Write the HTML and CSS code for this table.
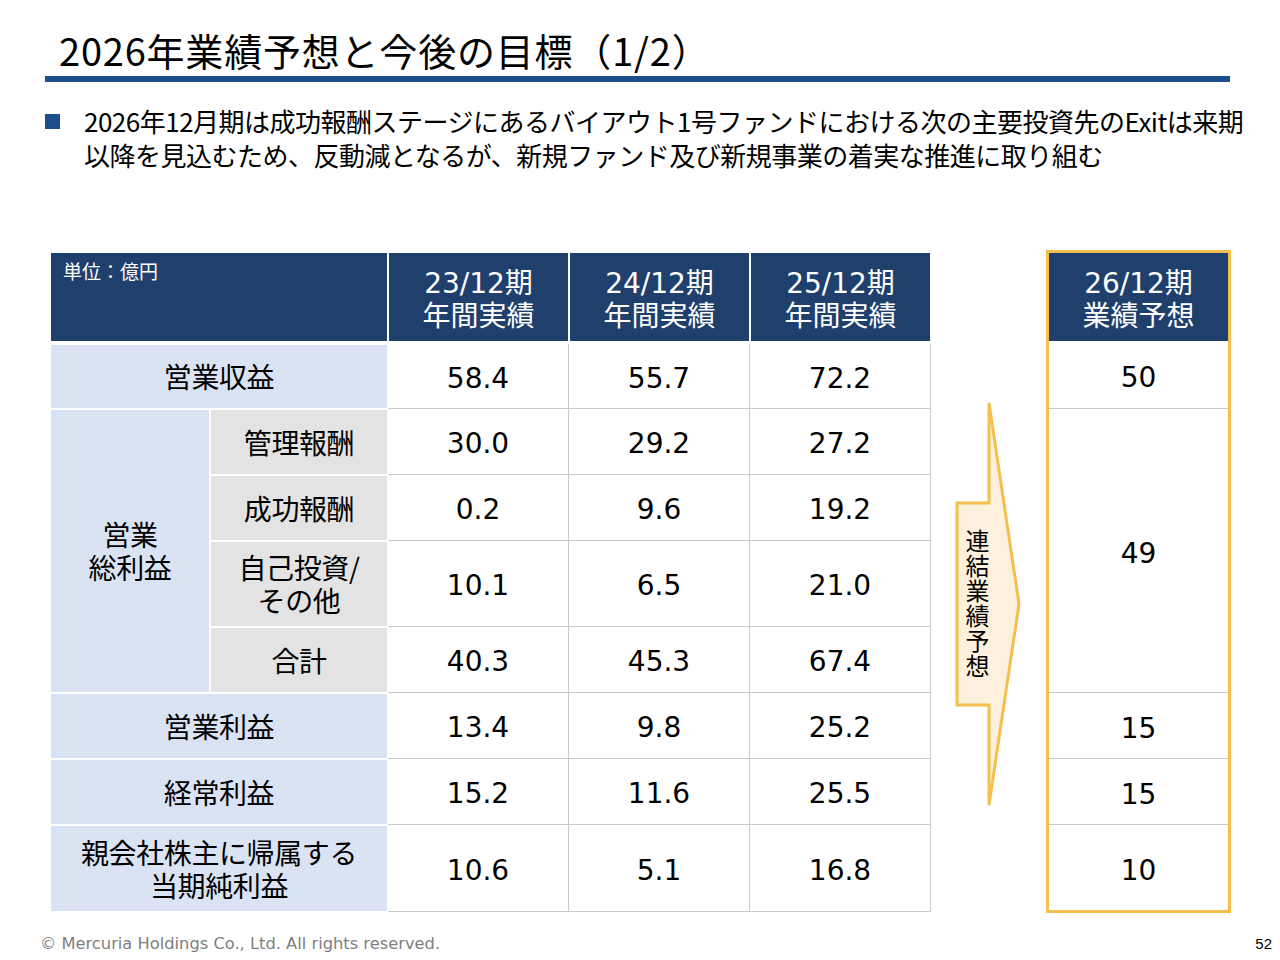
FILE: index.html
```html
<!DOCTYPE html>
<html lang="ja">
<head>
<meta charset="utf-8">
<title>2026年業績予想と今後の目標（1/2）</title>
<link rel="stylesheet" href="styles.css">
</head>
<body>
<div class="slide">
  <h1 class="title">2026年業績予想と今後の目標（1/2）</h1>
  <div class="rule"></div>

  <div class="lead">
    <span class="bullet"></span>
    <p class="lead-text">2026年12月期は成功報酬ステージにあるバイアウト1号ファンドにおける次の主要投資先のExitは来期<br>以降を見込むため、反動減となるが、新規ファンド及び新規事業の着実な推進に取り組む</p>
  </div>

  <div class="content">
    <div class="table">
      <div class="hd hd-unit span2">単位：億円</div>
      <div class="hd"><span>23/12期</span><span>年間実績</span></div>
      <div class="hd"><span>24/12期</span><span>年間実績</span></div>
      <div class="hd"><span>25/12期</span><span>年間実績</span></div>

      <div class="lbl span2">営業収益</div>
      <div class="num">58.4</div>
      <div class="num">55.7</div>
      <div class="num">72.2</div>

      <div class="lbl rowspan4"><span>営業</span><span>総利益</span></div>
      <div class="lbl sub">管理報酬</div>
      <div class="num">30.0</div>
      <div class="num">29.2</div>
      <div class="num">27.2</div>

      <div class="lbl sub">成功報酬</div>
      <div class="num">0.2</div>
      <div class="num">9.6</div>
      <div class="num">19.2</div>

      <div class="lbl sub"><span>自己投資/</span><span>その他</span></div>
      <div class="num">10.1</div>
      <div class="num">6.5</div>
      <div class="num">21.0</div>

      <div class="lbl sub">合計</div>
      <div class="num">40.3</div>
      <div class="num">45.3</div>
      <div class="num">67.4</div>

      <div class="lbl span2">営業利益</div>
      <div class="num">13.4</div>
      <div class="num">9.8</div>
      <div class="num">25.2</div>

      <div class="lbl span2">経常利益</div>
      <div class="num">15.2</div>
      <div class="num">11.6</div>
      <div class="num">25.5</div>

      <div class="lbl span2"><span>親会社株主に帰属する</span><span>当期純利益</span></div>
      <div class="num">10.6</div>
      <div class="num">5.1</div>
      <div class="num">16.8</div>
    </div>

    <div class="arrow-col">
      <svg class="arrow" width="70" height="406" viewBox="0 0 70 406" aria-hidden="true">
        <polygon points="36,2 66,203 36,404 36,304 4,304 4,102 36,102" fill="#fdf0dc" stroke="#f3c04f" stroke-width="3" stroke-linejoin="miter"/>
      </svg>
      <div class="arrow-text">連結業績予想</div>
    </div>

    <div class="forecast">
      <div class="f-hd"><span>26/12期</span><span>業績予想</span></div>
      <div class="f-cell">50</div>
      <div class="f-cell">49</div>
      <div class="f-cell">15</div>
      <div class="f-cell">15</div>
      <div class="f-cell f-last">10</div>
    </div>
  </div>

  <footer class="footer">
    <span class="copy">© Mercuria Holdings Co., Ltd. All rights reserved.</span>
    <span class="page">52</span>
  </footer>
</div>
</body>
</html>
```

FILE: styles.css
```css
body {
  margin: 0;
  background: #ffffff;
}

.slide {
  width: 1280px;
  height: 960px;
  box-sizing: border-box;
  padding-top: 31px;
  font-family: "Noto Sans CJK JP", "Noto Sans", sans-serif;
  color: #000000;
  overflow: hidden;
  background: #ffffff;
}

.title {
  margin: 0 0 0 59px;
  font-size: 38px;
  line-height: 38px;
  font-weight: 400;
  letter-spacing: 0.8px;
}

.rule {
  margin: 7px 0 0 45px;
  width: 1185px;
  height: 6px;
  background: #1f4e8d;
}

.lead {
  display: flex;
  align-items: flex-start;
  margin-top: 22px;
  padding-left: 45px;
}

.bullet {
  flex: none;
  width: 15px;
  height: 15px;
  margin-top: 10px;
  margin-right: 24px;
  background: #1f4e8d;
}

.lead-text {
  margin: 0;
  font-size: 26px;
  line-height: 34px;
  letter-spacing: -0.5px;
  white-space: nowrap;
}

.content {
  display: flex;
  align-items: flex-start;
  margin-top: 78px;
  padding-left: 50px;
}

.table {
  display: grid;
  grid-template-columns: 160px 178px repeat(3, 181px);
  grid-template-rows: 92px 65px 66px 66px 86px 66px 66px 66px 87px;
  margin-top: 2px;
}

.span2 {
  grid-column: span 2;
}

.rowspan4 {
  grid-row: span 4;
}

.hd {
  display: flex;
  flex-direction: column;
  align-items: center;
  justify-content: center;
  text-align: center;
  padding-top: 6px;
  background: #1f3f6d;
  color: #ffffff;
  border: 1px solid #ffffff;
  border-bottom-width: 3px;
  font-family: "DejaVu Sans", "Noto Sans CJK JP", sans-serif;
  font-size: 28px;
}

.hd span,
.f-hd span,
.lbl span {
  display: block;
  height: 33px;
  line-height: 33px;
}

.hd-unit {
  align-items: flex-start;
  justify-content: flex-start;
  text-align: left;
  padding: 7px 12px;
  font-family: "Noto Sans CJK JP", sans-serif;
  font-size: 19px;
  line-height: 22px;
}

.lbl {
  display: flex;
  flex-direction: column;
  align-items: center;
  justify-content: center;
  text-align: center;
  background: #dae3f3;
  border: 1px solid #ffffff;
  font-size: 28px;
  line-height: 33px;
  letter-spacing: -0.4px;
}

.sub {
  background: #e3e3e3;
}

.num {
  display: flex;
  align-items: center;
  justify-content: center;
  padding-top: 4px;
  border-right: 1px solid #c9c9c9;
  border-bottom: 1px solid #c9c9c9;
  font-family: "DejaVu Sans", "Noto Sans CJK JP", sans-serif;
  font-size: 28px;
}

.arrow-col {
  position: relative;
  flex: none;
  width: 115px;
  height: 663px;
}

.arrow {
  display: block;
  margin: 151px 0 0 22px;
}

.arrow-text {
  position: absolute;
  left: 34px;
  top: 279px;
  writing-mode: vertical-rl;
  font-size: 24px;
  line-height: 24px;
  letter-spacing: 1px;
}

.forecast {
  flex: none;
  width: 185px;
  box-sizing: border-box;
  border: 3px solid #f3c04f;
  display: grid;
  grid-template-rows: 88px 68px 284px 66px 66px 85px;
}

.f-hd {
  display: flex;
  flex-direction: column;
  align-items: center;
  justify-content: center;
  text-align: center;
  padding-top: 6px;
  background: #1f3f6d;
  color: #ffffff;
  font-family: "DejaVu Sans", "Noto Sans CJK JP", sans-serif;
  font-size: 28px;
}

.f-cell {
  display: flex;
  align-items: center;
  justify-content: center;
  padding-top: 6px;
  border-bottom: 1px solid #c9c9c9;
  font-family: "DejaVu Sans", "Noto Sans CJK JP", sans-serif;
  font-size: 28px;
}

.f-last {
  border-bottom: none;
}

.footer {
  display: flex;
  justify-content: space-between;
  align-items: center;
  margin-top: 20px;
  padding: 0 8px 0 40px;
  height: 20px;
}

.copy {
  font-family: "DejaVu Sans", sans-serif;
  font-size: 16.3px;
  color: #7f7f7f;
}

.page {
  font-family: "Liberation Sans", Arial, sans-serif;
  font-size: 15px;
  color: #000000;
}
```
